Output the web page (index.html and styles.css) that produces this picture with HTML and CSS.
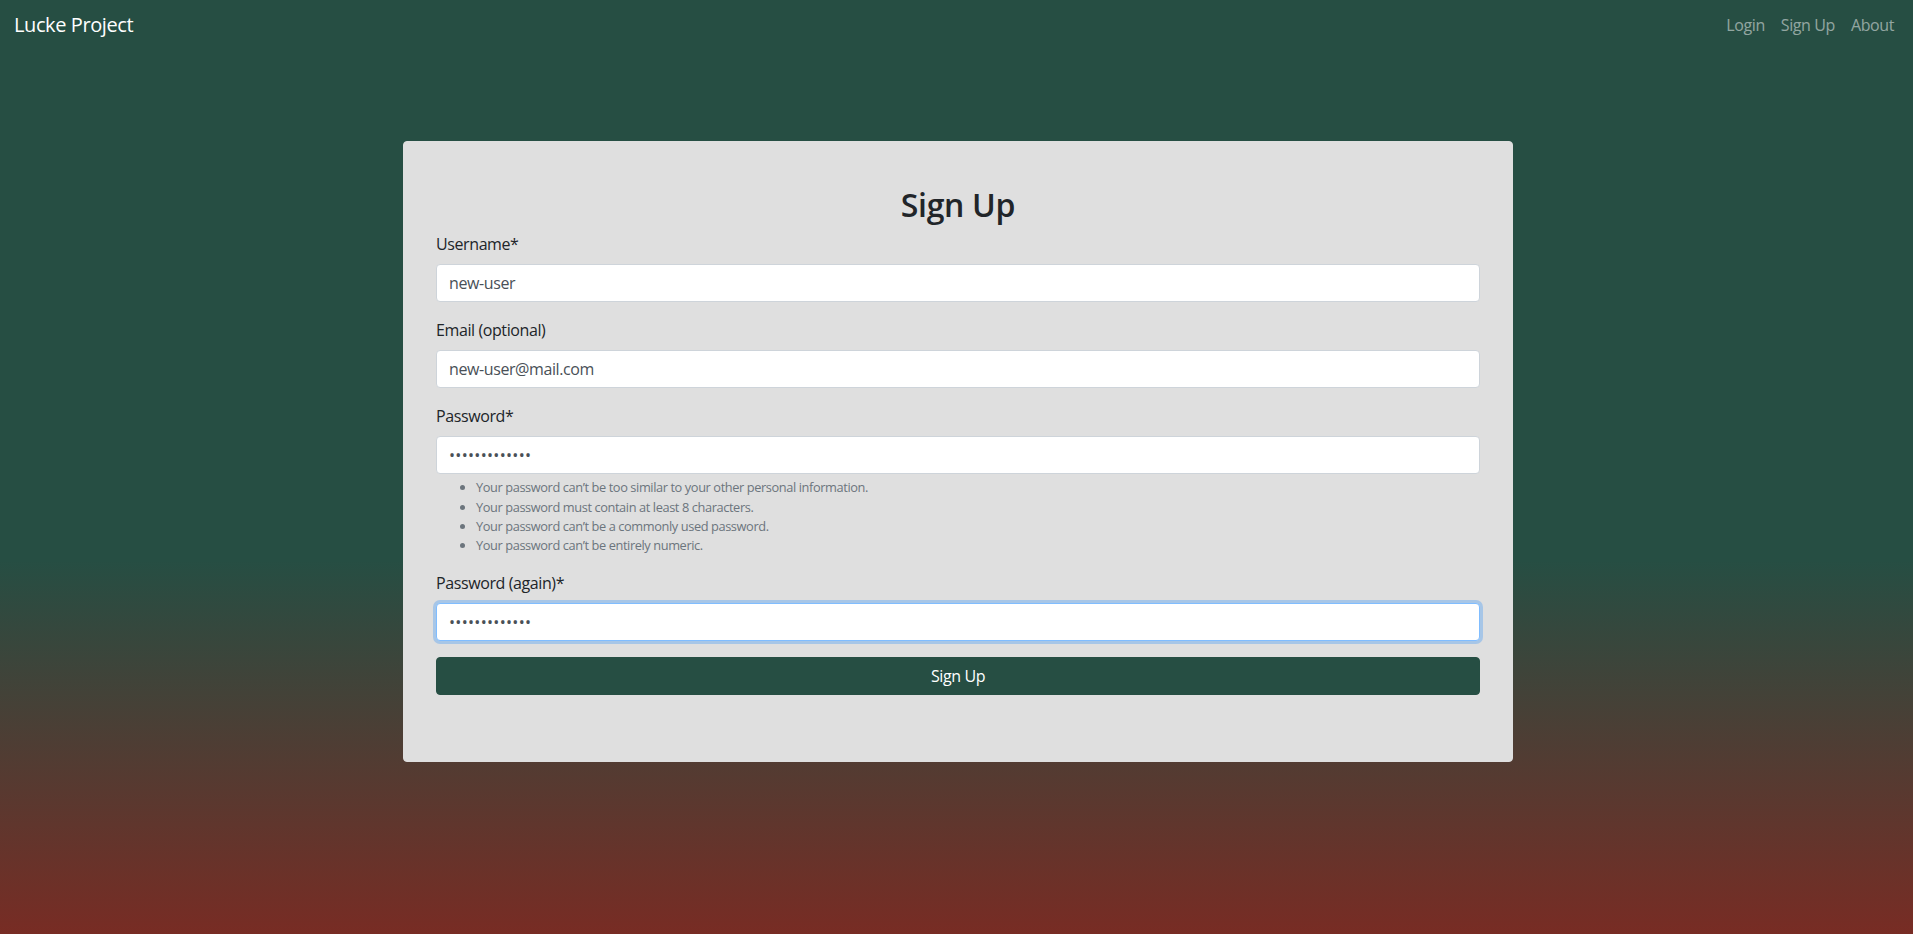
FILE: index.html
```html
<!DOCTYPE html>
<html lang="en">
<head>
<meta charset="utf-8">
<title>Sign Up - Lucke Project</title>
<link rel="stylesheet" href="styles.css">
</head>
<body>
<nav class="navbar">
  <a class="brand" href="#">Lucke Project</a>
  <ul class="nav-links">
    <li><a href="#">Login</a></li>
    <li><a href="#">Sign Up</a></li>
    <li><a href="#">About</a></li>
  </ul>
</nav>
<main class="main">
  <div class="card">
    <h2 class="title">Sign Up</h2>
    <form class="form">
      <div class="form-group">
        <label class="label" for="username">Username*</label>
        <input class="input" id="username" type="text" value="new-user">
      </div>
      <div class="form-group">
        <label class="label" for="email">Email (optional)</label>
        <input class="input" id="email" type="email" value="new-user@mail.com">
      </div>
      <div class="form-group">
        <label class="label" for="password1">Password*</label>
        <input class="input input-password" id="password1" type="password" value="abcdefghijklm">
        <ul class="help">
          <li>Your password can’t be too similar to your other personal information.</li>
          <li>Your password must contain at least 8 characters.</li>
          <li>Your password can’t be a commonly used password.</li>
          <li>Your password can’t be entirely numeric.</li>
        </ul>
      </div>
      <div class="form-group">
        <label class="label" for="password2">Password (again)*</label>
        <input class="input input-password input-focus" id="password2" type="password" value="abcdefghijklm">
      </div>
      <button class="btn" type="button">Sign Up</button>
    </form>
  </div>
</main>
</body>
</html>
```
FILE: styles.css
```css
* { box-sizing: border-box; }
html { height: 100%; }
body {
  margin: 0;
  min-height: 100vh;
  font-family: "Open Sans", "Noto Sans", "Liberation Sans", sans-serif;
  font-size: 16px;
  line-height: 1.5;
  letter-spacing: -0.025em;
  color: #212529;
  background: linear-gradient(to bottom, #264e43 0%, #264e43 60%, #782c24 100%);
}
.navbar {
  height: 50px;
  display: flex;
  align-items: center;
  justify-content: space-between;
  padding: 0 11px 0 14px;
}
.brand {
  color: #fff;
  font-size: 20px;
  text-decoration: none;
  line-height: 30px;
}
.nav-links {
  list-style: none;
  display: flex;
  margin: 0;
  padding: 0;
}
.nav-links a {
  display: block;
  padding: 0 8px;
  color: rgba(255, 255, 255, 0.5);
  text-decoration: none;
  font-size: 16px;
}
.main {
  display: flex;
  justify-content: center;
  padding-left: 3px;
  padding-top: 91px;
}
.card {
  width: 1110px;
  background: #dfdfdf;
  border-radius: 4px;
  border: 1px solid #dfdfdf;
  padding: 44px 32px 66px 32px;
}
.title {
  margin: 0 0 8px;
  text-align: center;
  font-size: 32px;
  font-weight: 600;
  line-height: 1.2;
  letter-spacing: -0.01em;
  color: #212529;
}
.form-group { margin-bottom: 16px; }
.label {
  display: inline-block;
  margin-bottom: 8px;
  color: #212529;
}
.input {
  display: block;
  width: 100%;
  height: 38px;
  padding: 6px 12px;
  font-family: inherit;
  font-size: 16px;
  line-height: 1.5;
  letter-spacing: -0.025em;
  color: #495057;
  background: #fff;
  border: 1px solid #ced4da;
  border-radius: 4px;
  outline: none;
}
.input-password { letter-spacing: 0.02em; }
.input-focus {
  border-color: #80bdff;
  box-shadow: 0 0 0 3px rgba(0, 123, 255, 0.25);
}
.help {
  margin: 4px 0 0;
  padding-left: 40px;
  font-size: 12.8px;
  line-height: 1.5;
  color: #6c757d;
}
.btn {
  display: block;
  width: 100%;
  height: 38px;
  font-family: inherit;
  font-size: 16px;
  line-height: 1.5;
  letter-spacing: -0.025em;
  color: #fff;
  background: #264e43;
  border: 1px solid #264e43;
  border-radius: 4px;
  padding: 6px 12px;
}
```
